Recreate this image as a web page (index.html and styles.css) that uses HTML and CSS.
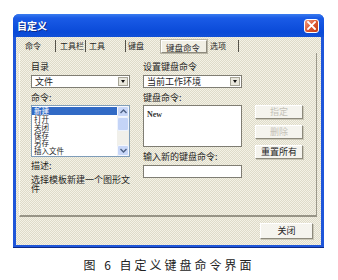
FILE: index.html
```html
<!DOCTYPE html>
<html lang="zh">
<head>
<meta charset="utf-8">
<link rel="stylesheet" href="styles.css">
</head>
<body>
<div class="window">
  <div class="titlebar">
    <span class="title">自定义</span>
    <span class="xbtn"><svg width="9" height="9" viewBox="0 0 9 9"><path d="M1 1L8 8M8 1L1 8" stroke="#fff" stroke-width="1.8" stroke-linecap="square"/></svg></span>
  </div>
  <div class="client">
    <div class="tabs">
      <span class="tab t1">命令</span>
      <span class="tab t2">工具栏</span>
      <span class="tab t3">工具</span>
      <span class="tab t4">键盘</span>
      <span class="tab t5 active">键盘命令</span>
      <span class="tab t6">选项</span>
    </div>
    <div class="panel">
      <div class="col left">
        <div class="label">目录</div>
        <div class="select"><span class="val">文件</span><span class="arrow"></span></div>
        <div class="label lbl2">命令:</div>
        <div class="listbox">
          <div class="items">
            <div class="item sel">新建</div>
            <div class="item">打开</div>
            <div class="item">关闭</div>
            <div class="item">保存</div>
            <div class="item">另存</div>
            <div class="item">插入文件</div>
          </div>
          <div class="vscroll">
            <span class="sb-btn"><svg width="7" height="5" viewBox="0 0 7 5"><path d="M0.5 4L3.5 1L6.5 4" fill="none" stroke="#4d6185" stroke-width="1.4"/></svg></span>
            <span class="sb-thumb"></span>
            <span class="sb-track"></span>
            <span class="sb-btn"><svg width="7" height="5" viewBox="0 0 7 5"><path d="M0.5 1L3.5 4L6.5 1" fill="none" stroke="#4d6185" stroke-width="1.4"/></svg></span>
          </div>
        </div>
        <div class="label lbl3">描述:</div>
        <div class="desc">选择模板新建一个图形文件</div>
      </div>
      <div class="col mid">
        <div class="label">设置键盘命令</div>
        <div class="select"><span class="val">当前工作环境</span><span class="arrow"></span></div>
        <div class="label lbl2">键盘命令:</div>
        <div class="textarea"><span class="cmd">New</span></div>
        <div class="label lbl4">输入新的键盘命令:</div>
        <div class="input"></div>
      </div>
      <div class="col btns">
        <div class="btn disabled">指定</div>
        <div class="btn disabled">删除</div>
        <div class="btn">重置所有</div>
      </div>
    </div>
    <div class="footer">
      <div class="btn closebtn">关闭</div>
    </div>
  </div>
</div>
<p class="caption">图 6 自定义键盘命令界面</p>
</body>
</html>
```

FILE: styles.css
```css
* { box-sizing: border-box; }
html, body { margin: 0; padding: 0; background: #fff; }
body {
  padding: 14px 0 0 13px;
  font-family: "Noto Sans CJK SC", "Noto Sans", sans-serif;
  font-size: 9px;
  color: #1e1e1e;
}
.window {
  width: 311px;
  height: 234px;
  background: #1f56d9;
  border-radius: 6px 6px 0 0;
  border-bottom: 1px solid #0b2a86;
  display: flex;
  flex-direction: column;
  overflow: hidden;
}
.titlebar {
  height: 23px;
  flex: none;
  display: flex;
  align-items: center;
  justify-content: space-between;
  padding: 0 5px 0 4px;
  background: linear-gradient(#3a7cf0 0, #1a5be6 4px, #0a4ad8 18px, #1250d6 23px);
}
.title {
  color: #fff;
  font-size: 10px;
  font-weight: bold;
  line-height: 12px;
  text-shadow: 1px 1px 0 #0a2a8a;
}
.xbtn {
  width: 15px;
  height: 14px;
  border: 1px solid #fff;
  border-radius: 3px;
  background: linear-gradient(135deg, #f39b80, #d9552f 55%, #c23c16);
  display: flex;
  align-items: center;
  justify-content: center;
}
.client {
  flex: 1;
  margin: 0 3px 2px 3px;
  background: repeating-conic-gradient(#f4f2e6 0 25%, #dedbc9 0 50%) 0 0 / 2px 2px;
  display: flex;
  flex-direction: column;
}
.tabs {
  margin-top: 2px;
  height: 14px;
  padding-left: 3px;
  display: flex;
  align-items: center;
  flex: none;
  font-size: 8px;
}
.tab {
  height: 12px;
  line-height: 12px;
  border-right: 1px solid #55534a;
  white-space: nowrap;
}
.t1 { width: 37px; padding-left: 6px; }
.t2 { width: 30px; padding-left: 4px; }
.t3 { width: 40px; padding-left: 3px; }
.t4 { width: 35px; padding-left: 2px; border-right: none; }
.t5 {
  width: 46px;
  height: 13px;
  padding-left: 4px;
  font-size: 8.5px;
  border: 1px solid #8e8b7e;
  border-top-color: #fff;
  border-left-color: #fff;
  background: #f1efe4;
  outline: 1px solid #b9b6a6;
}
.t6 { width: 32px; padding-left: 3px; }
.panel {
  margin-left: 3px;
  width: 298px;
  height: 164px;
  flex: none;
  border-right: 1px solid #9c998b;
  border-bottom: 2px solid #979486;
  border-left: 1px solid #fbfaf5;
  padding: 9px 0 0 11px;
  display: flex;
  gap: 13px;
}
.col { display: flex; flex-direction: column; }
.left, .mid { width: 99px; }
.label { height: 10px; line-height: 10px; white-space: nowrap; }
.lbl2 { margin-top: 5px; }
.lbl3 { margin-top: 4px; }
.lbl4 { margin-top: 5px; }
.select {
  margin-top: 3px;
  height: 13px;
  background: #fff;
  border: 1px solid #7f7d73;
  display: flex;
  align-items: center;
  justify-content: space-between;
  padding: 0 1px 0 3px;
}
.val { line-height: 11px; }
.arrow {
  width: 10px;
  height: 9px;
  background: #e9e7dc;
  border: 1px solid #a7a597;
  position: relative;
}
.arrow::after {
  content: "";
  position: absolute;
  left: 2px;
  top: 2px;
  border-left: 2.5px solid transparent;
  border-right: 2.5px solid transparent;
  border-top: 3px solid #111;
}
.listbox {
  margin-top: 2px;
  height: 52px;
  background: #fff;
  border: 1px solid #7f9db9;
  display: flex;
  overflow: hidden;
}
.items { flex: 1; padding-top: 1px; overflow: hidden; }
.item {
  height: 8px;
  line-height: 8px;
  font-size: 7.5px;
  padding-left: 2px;
  white-space: nowrap;
}
.item.sel { background: #316ac5; color: #fff; }
.vscroll {
  width: 12px;
  display: flex;
  flex-direction: column;
  background: #f1f0ea;
}
.sb-btn {
  height: 11px;
  flex: none;
  background: #c8d7f8;
  border: 1px solid #f4f7fd;
  border-radius: 2px;
  display: flex;
  align-items: center;
  justify-content: center;
}
.sb-thumb {
  height: 14px;
  flex: none;
  background: #c4d4f7;
  border: 1px solid #eef3fd;
  border-radius: 2px;
}
.sb-track { flex: 1; }
.desc {
  margin-top: 4px;
  line-height: 9px;
  width: 99px;
}
.textarea {
  margin-top: 2px;
  height: 42px;
  background: #fff;
  border: 1px solid #7f7d73;
  padding: 1px 3px;
}
.cmd {
  font-family: "Liberation Serif", serif;
  font-size: 8px;
  font-weight: bold;
  line-height: 9px;
  color: #333;
}
.input {
  margin-top: 3px;
  height: 13px;
  background: #fff;
  border: 1px solid #7f7d73;
}
.btns { width: 48px; padding-top: 43px; gap: 6px; }
.btn {
  height: 14px;
  line-height: 12px;
  text-align: center;
  background: #f5f4ee;
  border: 1px solid #8d8a7c;
  border-top-color: #fff;
  border-left-color: #fff;
  box-shadow: 1px 1px 0 #c9c6b6;
  white-space: nowrap;
}
.btn.disabled { color: #c4c2b8; }
.footer {
  display: flex;
  justify-content: flex-end;
  padding: 6px 8px 0 0;
}
.closebtn { width: 53px; height: 16px; line-height: 14px; }
.caption {
  margin: 10px 0 0 -13px;
  width: 338px;
  text-align: center;
  font-size: 12px;
  line-height: 14px;
  letter-spacing: 3px;
  white-space: pre;
  color: #222;
}
```
